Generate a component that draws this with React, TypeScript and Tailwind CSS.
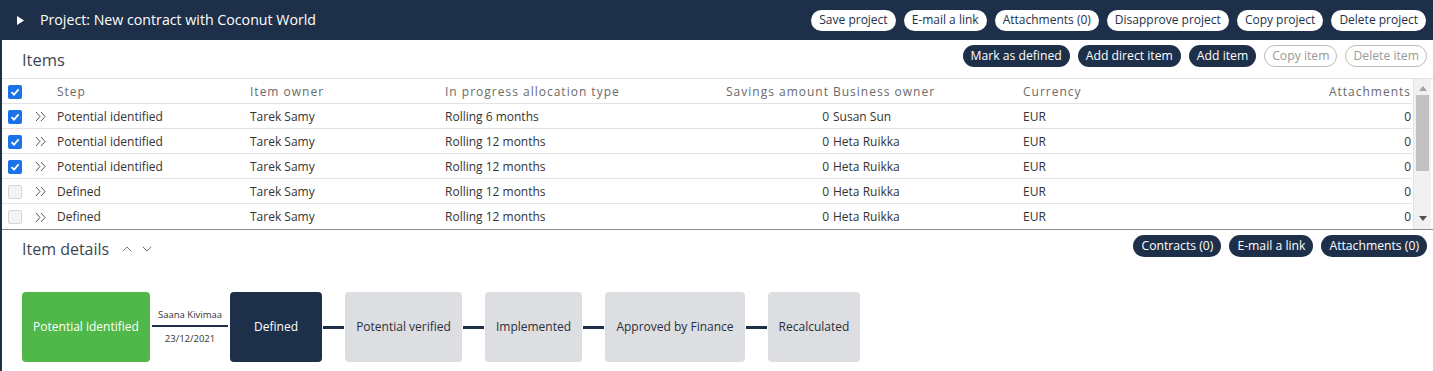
import { ChevronUp, ChevronDown } from "lucide-react";

type Row = {
  checked: boolean;
  step: string;
  owner: string;
  alloc: string;
  savings: string;
  business: string;
  currency: string;
  attachments: string;
};

const rows: Row[] = [
  { checked: true, step: "Potential identified", owner: "Tarek Samy", alloc: "Rolling 6 months", savings: "0", business: "Susan Sun", currency: "EUR", attachments: "0" },
  { checked: true, step: "Potential identified", owner: "Tarek Samy", alloc: "Rolling 12 months", savings: "0", business: "Heta Ruikka", currency: "EUR", attachments: "0" },
  { checked: true, step: "Potential identified", owner: "Tarek Samy", alloc: "Rolling 12 months", savings: "0", business: "Heta Ruikka", currency: "EUR", attachments: "0" },
  { checked: false, step: "Defined", owner: "Tarek Samy", alloc: "Rolling 12 months", savings: "0", business: "Heta Ruikka", currency: "EUR", attachments: "0" },
  { checked: false, step: "Defined", owner: "Tarek Samy", alloc: "Rolling 12 months", savings: "0", business: "Heta Ruikka", currency: "EUR", attachments: "0" },
];

const cols = "grid grid-cols-[31px_24px_193px_195px_195px_189px_194px_195px_193px]";

const Checkbox = ({ checked }: { checked: boolean }) =>
  checked ? (
    <div className="w-[14px] h-[14px] rounded-[2px] bg-[#1a73e8] flex items-center justify-center">
      <svg width="10" height="10" viewBox="0 0 10 10">
        <path d="M1.5 5.2 L4 7.6 L8.6 2.4" fill="none" stroke="white" strokeWidth="1.8" />
      </svg>
    </div>
  ) : (
    <div className="w-[14px] h-[14px] rounded-[2px] bg-[#f4f4f4] border border-[#d6d6d6]" />
  );

const DoubleChevron = () => (
  <svg width="12" height="11" viewBox="0 0 12 11">
    <path d="M1 1 L5 5.5 L1 10 M6 1 L10 5.5 L6 10" fill="none" stroke="#555" strokeWidth="1" />
  </svg>
);

const PillLight = ({ label }: { label: string }) => (
  <button className="h-[21px] px-[8px] rounded-full bg-white text-[#1e3049] text-[12px] leading-none">
    {label}
  </button>
);

const PillDark = ({ label }: { label: string }) => (
  <button className="h-[22px] px-[8px] rounded-full bg-[#1e3049] text-white text-[12.2px] leading-none">
    {label}
  </button>
);

const PillDisabled = ({ label }: { label: string }) => (
  <button className="h-[22px] px-[7px] rounded-full bg-white border border-[#bdbdbd] text-[#9a9a9a] text-[12.2px] leading-none">
    {label}
  </button>
);

const Connector = () => <div className="w-[21px] h-[3px] bg-[#1e3049] mx-[1px]" />;

const Stage = ({ label, w, tone }: { label: string; w: string; tone: "green" | "navy" | "gray" }) => {
  const toneCls =
    tone === "green"
      ? "bg-[#50b848] text-white"
      : tone === "navy"
      ? "bg-[#1e3049] text-white"
      : "bg-[#dddee1] text-[#2a2f3a]";
  return (
    <div className={`${w} h-[70px] rounded-[4px] flex items-center justify-center text-[12px] ${toneCls}`}>
      {label}
    </div>
  );
};

export default function App() {
  return (
    <div className="w-[1433px] h-[371px] overflow-hidden bg-[#1e3049] font-['Open_Sans',sans-serif]">
      {/* project header */}
      <div className="h-[40px] flex items-center pl-[17px] pr-[7px]">
        <svg width="7" height="9" viewBox="0 0 7 9" className="mr-[16px]">
          <path d="M0 0 L7 4.5 L0 9 Z" fill="white" />
        </svg>
        <div className="text-white text-[14.2px]">Project: New contract with Coconut World</div>
        <div className="ml-auto flex gap-[8px]">
          <PillLight label="Save project" />
          <PillLight label="E-mail a link" />
          <PillLight label="Attachments (0)" />
          <PillLight label="Disapprove project" />
          <PillLight label="Copy project" />
          <PillLight label="Delete project" />
        </div>
      </div>

      <div className="ml-[2px] h-[331px] bg-white">
        {/* items header */}
        <div className="h-[39px] flex items-center pl-[20px] pr-[6px] border-b border-[#e3e3e3]">
          <div className="text-[16.5px] text-[#3d4753] mt-[2px]">Items</div>
          <div className="ml-auto flex gap-[8px] mt-[-6px]">
            <PillDark label="Mark as defined" />
            <PillDark label="Add direct item" />
            <PillDark label="Add item" />
            <PillDisabled label="Copy item" />
            <PillDisabled label="Delete item" />
          </div>
        </div>

        {/* table */}
        <div className="flex border-b border-[#8c8c8c]">
          <div className="w-[1410px]">
            <div className={`${cols} h-[25px] pt-[1px] items-center border-b border-[#e3e3e3] text-[12px] tracking-[1px] text-[#6a6a6a]`}>
              <div className="pl-[6px]"><Checkbox checked /></div>
              <div />
              <div>Step</div>
              <div>Item owner</div>
              <div>In progress allocation type</div>
              <div className="text-right">Savings amount</div>
              <div className="pl-[4px]">Business owner</div>
              <div>Currency</div>
              <div className="text-right">Attachments</div>
            </div>
            {rows.map((r, i) => (
              <div
                key={i}
                className={`${cols} h-[25px] pt-[1px] items-center text-[12px] text-[#333] ${i < rows.length - 1 ? "border-b border-[#e3e3e3]" : ""}`}
              >
                <div className="pl-[6px]"><Checkbox checked={r.checked} /></div>
                <div className="pl-[2px] flex"><DoubleChevron /></div>
                <div>{r.step}</div>
                <div>{r.owner}</div>
                <div>{r.alloc}</div>
                <div className="text-right">{r.savings}</div>
                <div className="pl-[4px]">{r.business}</div>
                <div>{r.currency}</div>
                <div className="text-right">{r.attachments}</div>
              </div>
            ))}
          </div>
          {/* scrollbar */}
          <div className="w-[18px] ml-[1px] bg-[#f1f1f1] border-l border-[#e3e3e3] flex flex-col items-center">
            <svg width="8" height="5" viewBox="0 0 8 5" className="mt-[7px]">
              <path d="M0 5 L4 0 L8 5 Z" fill="#a3a3a3" />
            </svg>
            <div className="w-[13px] h-[76px] bg-[#c1c1c1] mt-[4px]" />
            <svg width="8" height="5" viewBox="0 0 8 5" className="mt-auto mb-[8px]">
              <path d="M0 0 L4 5 L8 0 Z" fill="#505050" />
            </svg>
          </div>
        </div>

        {/* item details */}
        <div className="h-[38px] flex items-center pl-[20px] pr-[6px]">
          <div className="text-[16px] text-[#3d4753] mt-[-1px]">Item details</div>
          <div className="flex items-center gap-[4px] ml-[10px] text-[#555]">
            <ChevronUp size={16} strokeWidth={1.2} />
            <ChevronDown size={16} strokeWidth={1.2} />
          </div>
          <div className="ml-auto flex gap-[8px] mt-[-6px]">
            <PillDark label="Contracts (0)" />
            <PillDark label="E-mail a link" />
            <PillDark label="Attachments (0)" />
          </div>
        </div>

        <div className="flex items-center pl-[20px] mt-[24px]">
          <Stage label="Potential identified" w="w-[128px]" tone="green" />
          <div className="w-[80px] flex flex-col items-center">
            <div className="text-[9.5px] text-[#333] leading-[12px] mb-[4px]">Saana Kivimaa</div>
            <div className="w-[76px] h-[2px] bg-[#1e3049]" />
            <div className="text-[9.5px] text-[#333] leading-[12px] mt-[6px]">23/12/2021</div>
          </div>
          <Stage label="Defined" w="w-[92px]" tone="navy" />
          <Connector />
          <Stage label="Potential verified" w="w-[117px]" tone="gray" />
          <Connector />
          <Stage label="Implemented" w="w-[97px]" tone="gray" />
          <Connector />
          <Stage label="Approved by Finance" w="w-[140px]" tone="gray" />
          <Connector />
          <Stage label="Recalculated" w="w-[92px]" tone="gray" />
        </div>
      </div>
    </div>
  );
}
